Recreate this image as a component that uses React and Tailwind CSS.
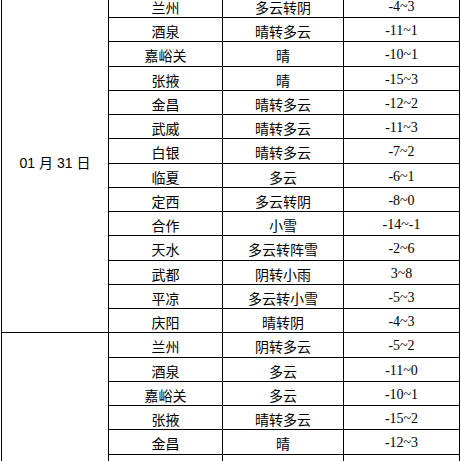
const groups = [
  {
    date: '01 月 31 日',
    rows: [
      ['兰州', '多云转阴', '-4~3'],
      ['酒泉', '晴转多云', '-11~1'],
      ['嘉峪关', '晴', '-10~1'],
      ['张掖', '晴', '-15~3'],
      ['金昌', '晴转多云', '-12~2'],
      ['武威', '晴转多云', '-11~3'],
      ['白银', '晴转多云', '-7~2'],
      ['临夏', '多云', '-6~1'],
      ['定西', '多云转阴', '-8~0'],
      ['合作', '小雪', '-14~-1'],
      ['天水', '多云转阵雪', '-2~6'],
      ['武都', '阴转小雨', '3~8'],
      ['平凉', '多云转小雪', '-5~3'],
      ['庆阳', '晴转阴', '-4~3'],
    ],
  },
  {
    date: '02 月 01 日',
    rows: [
      ['兰州', '阴转多云', '-5~2'],
      ['酒泉', '多云', '-11~0'],
      ['嘉峪关', '多云', '-10~1'],
      ['张掖', '晴转多云', '-15~2'],
      ['金昌', '晴', '-12~3'],
      ['武威', '多云', '-11~2'],
      ['白银', '多云', '-7~1'],
      ['临夏', '多云', '-6~2'],
      ['定西', '多云', '-8~1'],
      ['合作', '多云', '-15~0'],
      ['天水', '多云', '-2~7'],
      ['武都', '多云', '3~10'],
      ['平凉', '多云', '-6~4'],
      ['庆阳', '多云', '-5~4'],
    ],
  },
];

const cell = 'border border-black p-0 text-center align-middle text-[14px] leading-none pt-[3px]';
const cjk = "font-['SimSun','Noto_Sans_CJK_SC',sans-serif]";

export default function App() {
  return (
    <div className="h-[461px] w-[461px] overflow-hidden bg-white text-black">
      <table className="-mt-[7.25px] ml-px w-[459px] table-fixed border-collapse">
        <colgroup>
          <col className="w-[107px]" />
          <col className="w-[114px]" />
          <col className="w-[121px]" />
          <col className="w-[116px]" />
        </colgroup>
        <tbody>
          {groups.map((g) =>
            g.rows.map((r, i) => (
              <tr key={g.date + r[0]} className="h-[24.25px]">
                {i === 0 && (
                  <td
                    rowSpan={g.rows.length}
                    className="border border-black p-0 text-center align-middle text-[14px] font-['Liberation_Sans','Noto_Sans_CJK_SC',sans-serif]"
                  >
                    {g.date}
                  </td>
                )}
                <td className={`${cell} ${cjk}`}>{r[0]}</td>
                <td className={`${cell} ${cjk}`}>{r[1]}</td>
                <td className={`${cell} font-['Liberation_Serif',serif]`}>{r[2]}</td>
              </tr>
            ))
          )}
        </tbody>
      </table>
    </div>
  );
}
